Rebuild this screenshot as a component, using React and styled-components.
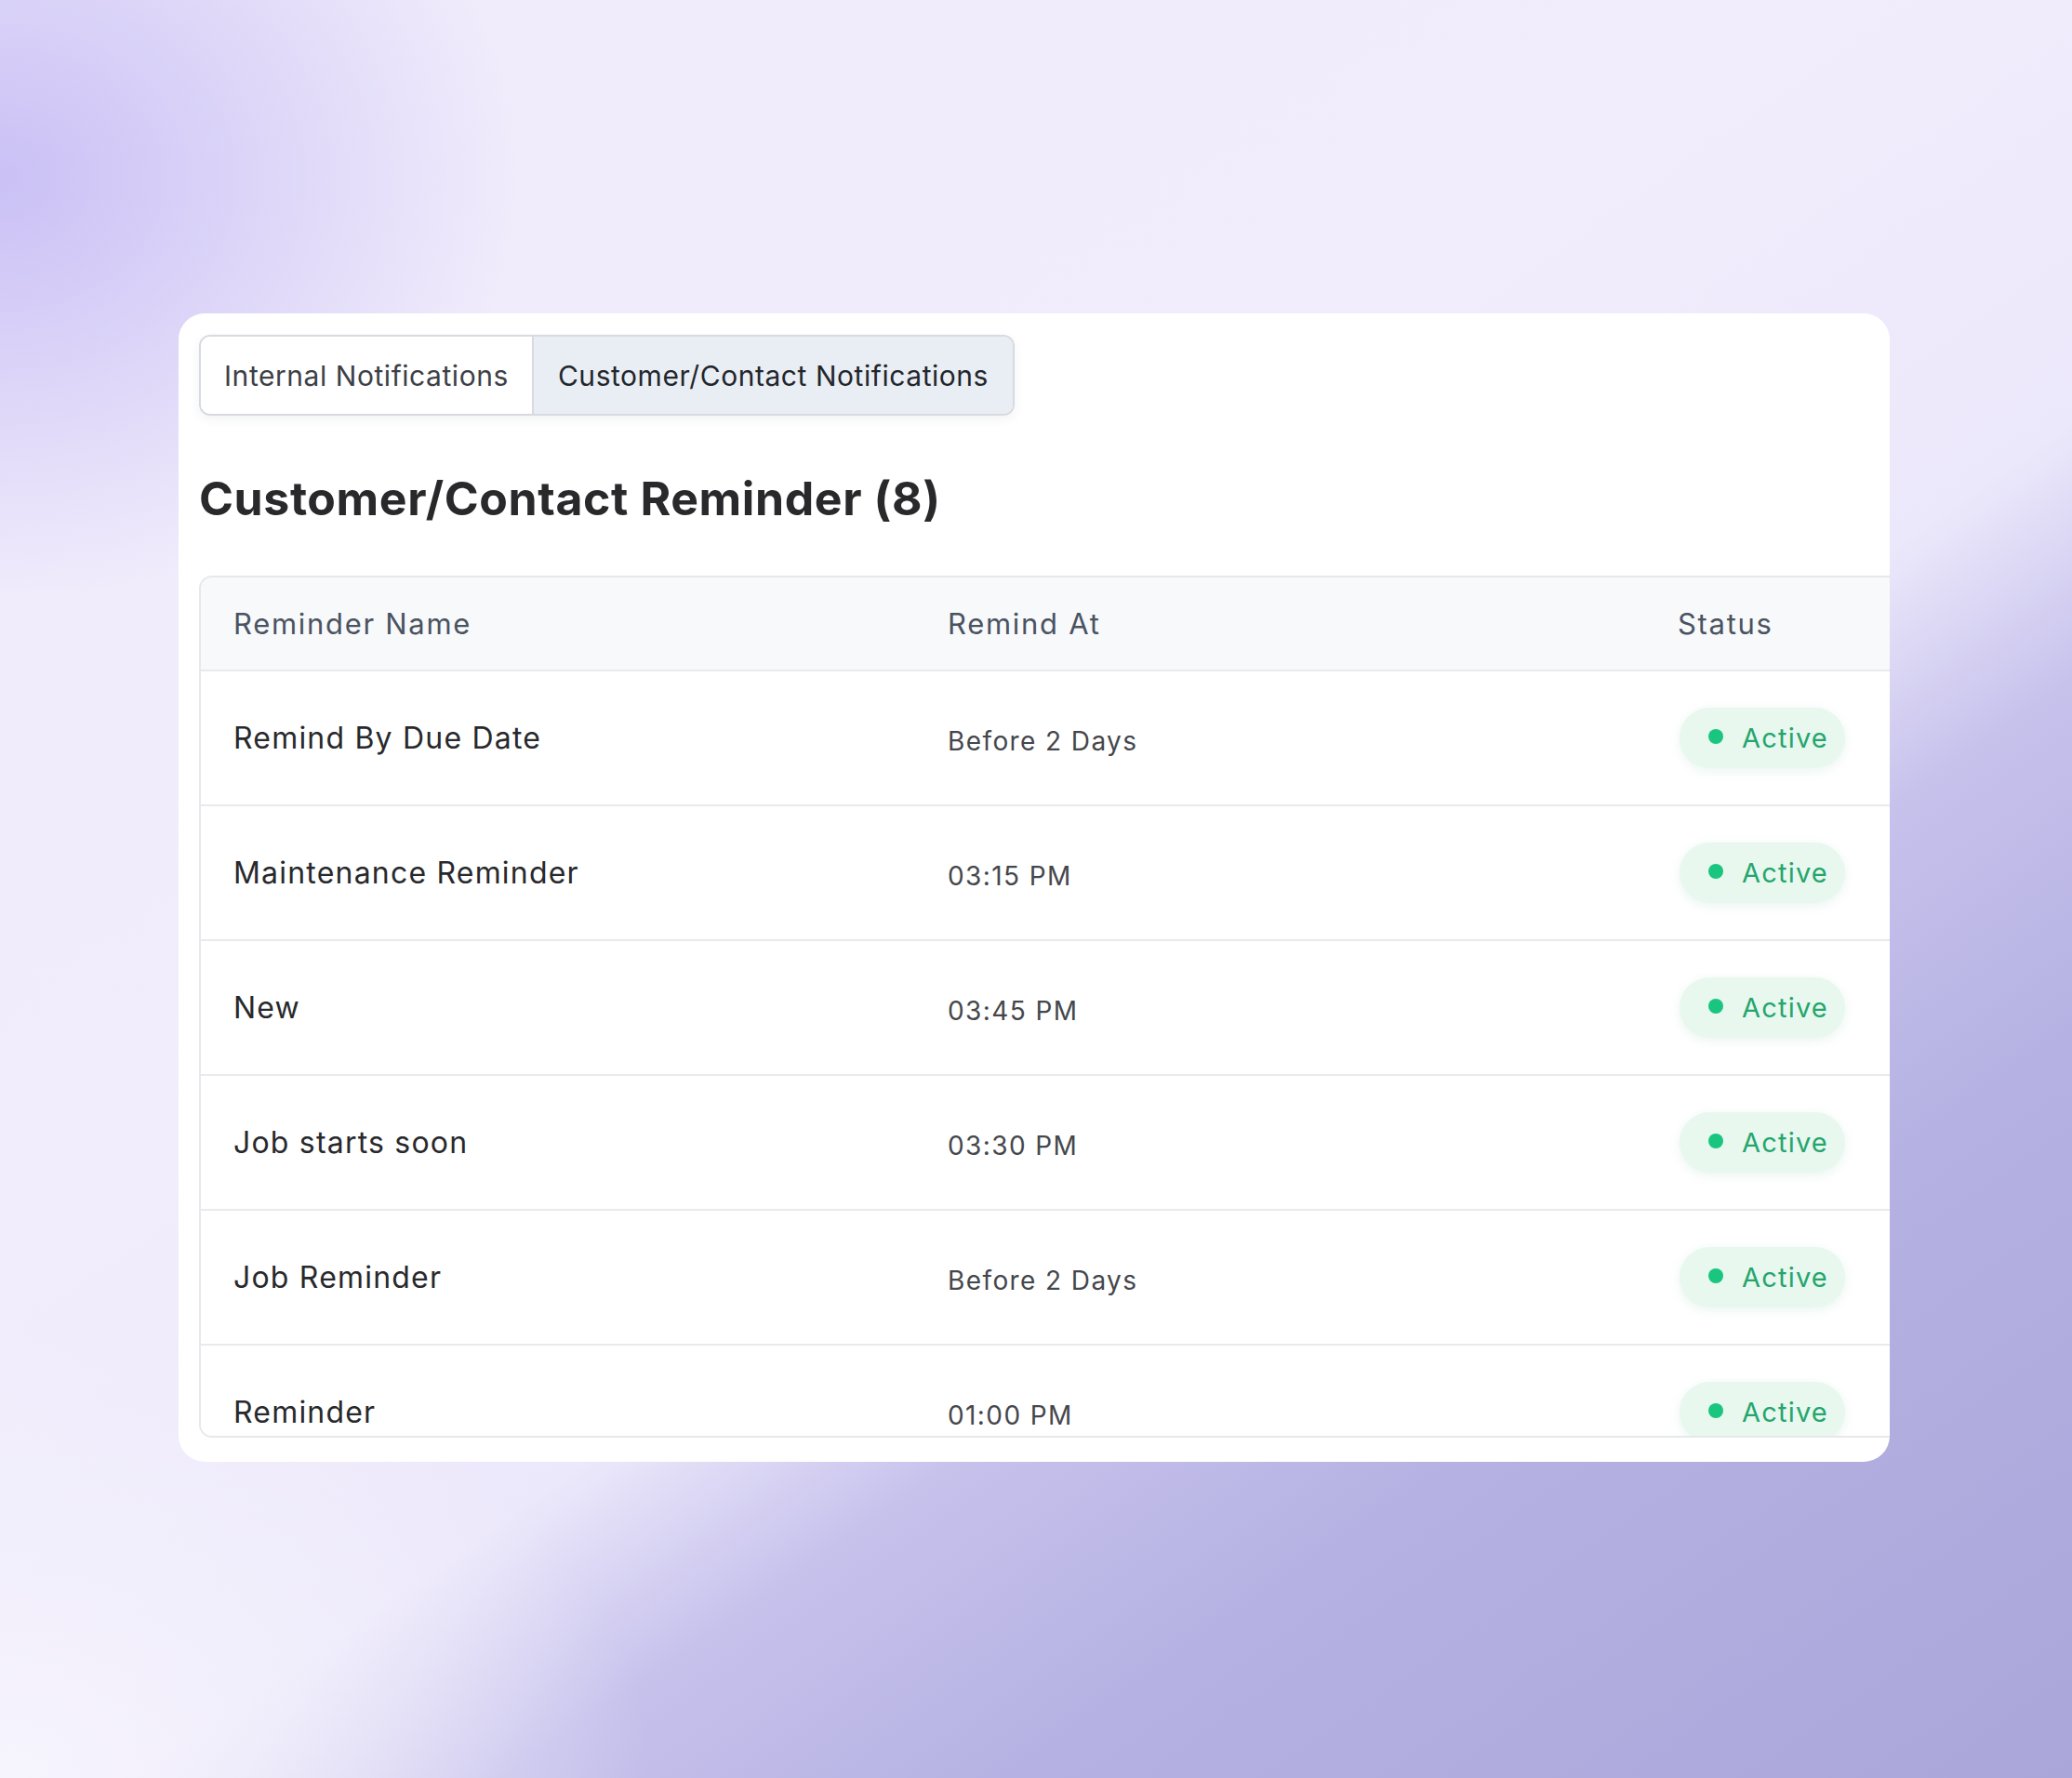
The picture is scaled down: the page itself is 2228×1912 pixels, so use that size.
import styled, { createGlobalStyle } from "styled-components";

const GlobalStyle = createGlobalStyle`
  * {
    box-sizing: border-box;
  }

  body {
    margin: 0;
    font-family: Inter, "Noto Sans", "Liberation Sans", sans-serif;
    -webkit-font-smoothing: antialiased;
  }
`;

const Page = styled.div`
  width: 2228px;
  height: 1912px;
  padding: 337px 0 0 192px;
  overflow: hidden;
  background:
    radial-gradient(ellipse 800px 650px at 0% 10%, rgba(200, 190, 245, 0.95), rgba(200, 190, 245, 0) 70%),
    radial-gradient(ellipse 1000px 700px at 0% 100%, rgba(246, 244, 253, 1), rgba(246, 244, 253, 0) 70%),
    linear-gradient(145deg, #efebfb 0%, #f1edfc 40%, #ece8fb 58%, #c7c2ec 66%, #b5b1e2 77%, #aaa6da 100%);
`;

const Card = styled.div`
  width: 1840px;
  padding: 23px 0 26px 22px;
  background: #ffffff;
  border-radius: 28px;
  overflow: hidden;
`;

const TabGroup = styled.div`
  display: inline-flex;
  height: 87px;
  border: 2px solid #d8dadf;
  border-radius: 12px;
  overflow: hidden;
  box-shadow: 0 4px 12px rgba(40, 50, 80, 0.06);
`;

const Tab = styled.button`
  display: flex;
  align-items: center;
  padding: 0 ${(p) => (p.$active ? "26px" : "25px")};
  border: none;
  border-left: ${(p) => (p.$first ? "none" : "2px solid #d8dadf")};
  background: ${(p) => (p.$active ? "#e9eef4" : "#ffffff")};
  color: ${(p) => (p.$active ? "#23262d" : "#3d4047")};
  font-family: inherit;
  font-size: 30px;
  letter-spacing: 0.55px;
  cursor: pointer;
`;

const Heading = styled.h1`
  margin: 59px 0 52px;
  font-size: 50px;
  line-height: 61px;
  font-weight: 700;
  letter-spacing: 0.6px;
  color: #29292b;
`;

const TableWrap = styled.div`
  width: 1860px;
  height: 927px;
  border: 2px solid #e6e8ec;
  border-right: none;
  border-radius: 14px 0 0 14px;
  overflow: hidden;
`;

const Row = styled.div`
  display: grid;
  grid-template-columns: 768px 785px 1fr;
  align-items: center;
  height: ${(p) => (p.$header ? "101px" : "145px")};
  padding-left: 35px;
  background: ${(p) => (p.$header ? "#f8f9fb" : "#ffffff")};
  border-bottom: 2px solid #e9eaed;
`;

const HeadCell = styled.div`
  font-size: 31px;
  color: #4a5361;
  letter-spacing: 1.7px;
`;

const NameCell = styled.div`
  font-size: 32px;
  color: #28292c;
  letter-spacing: 1.2px;
`;

const TimeCell = styled.div`
  font-size: 28px;
  color: #45474c;
  letter-spacing: 1.4px;
  padding-top: 6px;
`;

const StatusPill = styled.span`
  display: inline-flex;
  align-items: center;
  gap: 20px;
  height: 65px;
  padding: 0 18px 0 31px;
  border-radius: 33px;
  background: #e8f8ef;
  box-shadow: 0 3px 12px rgba(40, 160, 110, 0.1);
  color: #24a56d;
  font-size: 29px;
  letter-spacing: 1.2px;
  margin-left: 2px;
`;

const Dot = styled.span`
  width: 16px;
  height: 16px;
  border-radius: 50%;
  background: #19c57f;
  margin-top: -4px;
`;

const TOTAL = 8;

const reminders = [
  { name: "Remind By Due Date", at: "Before 2 Days" },
  { name: "Maintenance Reminder", at: "03:15 PM" },
  { name: "New", at: "03:45 PM" },
  { name: "Job starts soon", at: "03:30 PM" },
  { name: "Job Reminder", at: "Before 2 Days" },
  { name: "Reminder", at: "01:00 PM" },
];

function App() {
  return (
    <>
      <GlobalStyle />
      <Page>
        <Card>
          <TabGroup>
            <Tab $first>Internal Notifications</Tab>
            <Tab $active>Customer/Contact Notifications</Tab>
          </TabGroup>

          <Heading>Customer/Contact Reminder ({TOTAL})</Heading>

          <TableWrap>
            <Row $header>
              <HeadCell>Reminder Name</HeadCell>
              <HeadCell>Remind At</HeadCell>
              <HeadCell>Status</HeadCell>
            </Row>
            {reminders.map((r) => (
              <Row key={r.name}>
                <NameCell>{r.name}</NameCell>
                <TimeCell>{r.at}</TimeCell>
                <div>
                  <StatusPill>
                    <Dot />
                    Active
                  </StatusPill>
                </div>
              </Row>
            ))}
          </TableWrap>
        </Card>
      </Page>
    </>
  );
}

export default App;
